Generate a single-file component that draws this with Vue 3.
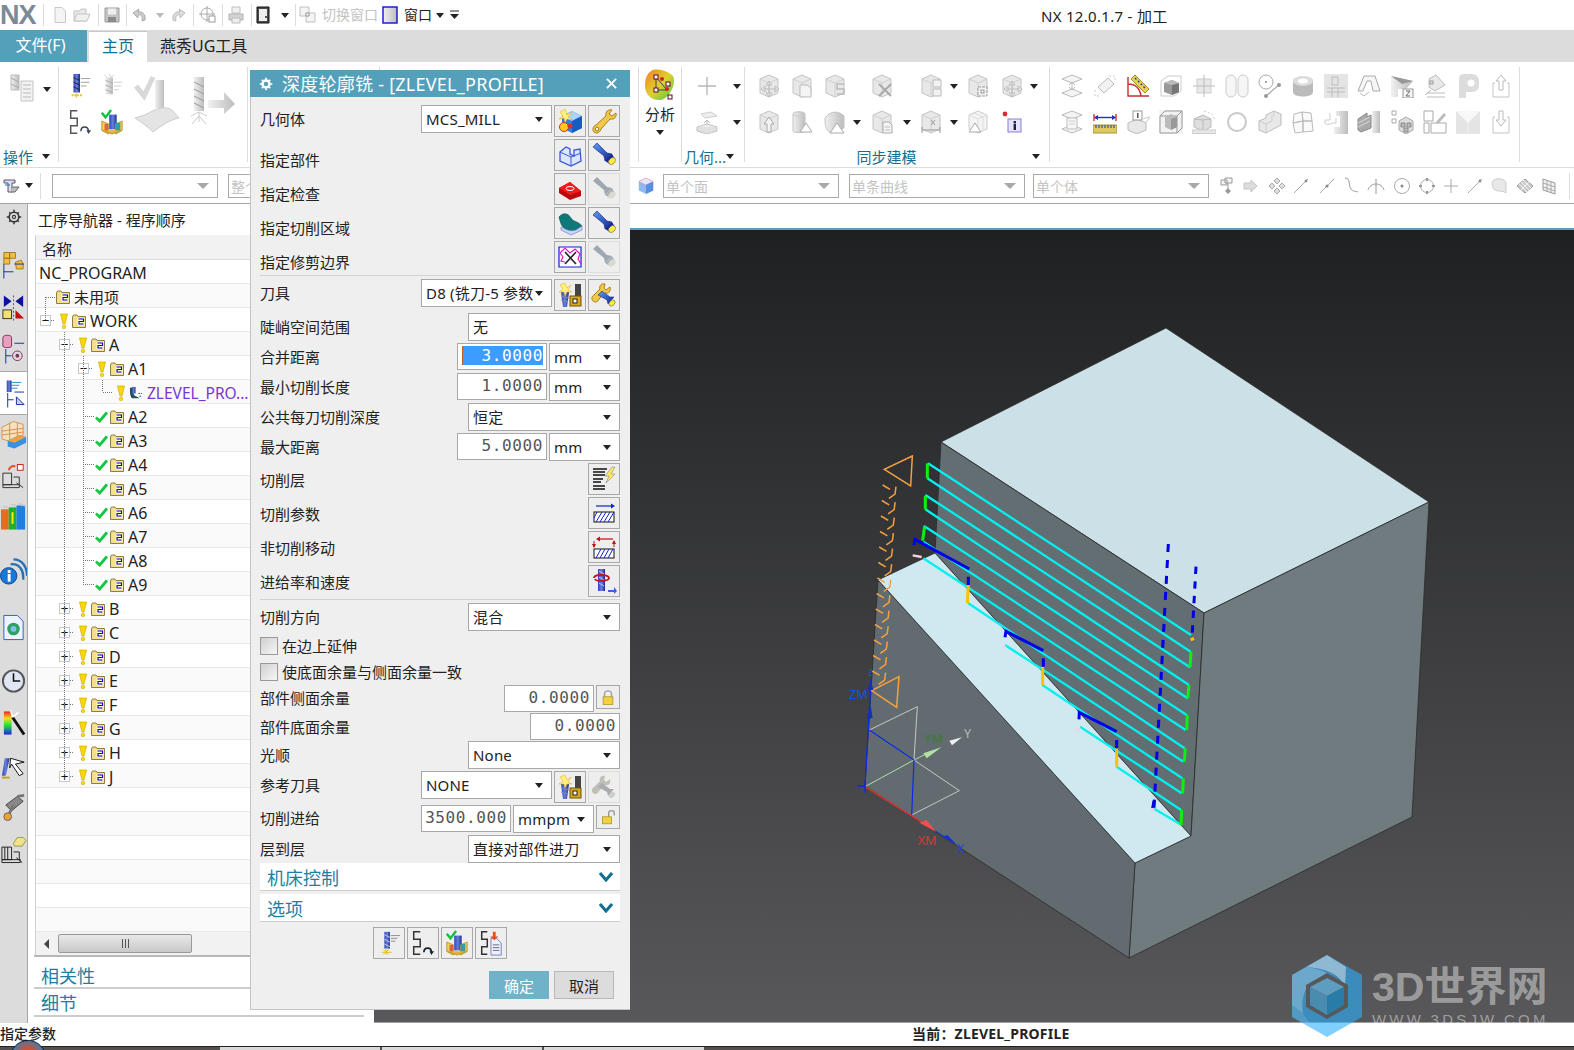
<script setup>
const place = (list) => {
  let r = 0
  return list.map((it) => {
    const ml = it.c - it.w / 2 - r
    r = it.c + it.w / 2
    return { ...it, ml }
  })
}

const topItems = place([
  { t: 'sep', c: 43, w: 1 }, { t: 'ic', ic: 't-doc', c: 60, w: 18 }, { t: 'ic', ic: 't-open', c: 82, w: 20 },
  { t: 'sep', c: 98, w: 1 }, { t: 'ic', ic: 't-save', c: 112, w: 18 }, { t: 'sep', c: 126, w: 1 },
  { t: 'ic', ic: 't-undo', c: 140, w: 16 }, { t: 'tri', g: 1, c: 160, w: 8 }, { t: 'ic', ic: 't-redo', c: 178, w: 16 },
  { t: 'sep', c: 193, w: 1 }, { t: 'ic', ic: 't-cross', c: 208, w: 18 }, { t: 'sep', c: 222, w: 1 },
  { t: 'ic', ic: 't-print', c: 236, w: 18 }, { t: 'sep', c: 251, w: 1 }, { t: 'ic', ic: 't-book', c: 263, w: 16 },
  { t: 'tri', c: 285, w: 9 }, { t: 'sep', c: 295, w: 1 }, { t: 'ic', ic: 't-sw', c: 308, w: 18 },
  { t: 'txt', v: '切换窗口', g: 1, c: 350, w: 56 }, { t: 'ic', ic: 't-win', c: 390, w: 16 },
  { t: 'txt', v: '窗口', c: 418, w: 28 }, { t: 'tri', c: 440, w: 9 }, { t: 'ic', ic: 't-tribar', c: 454, w: 9 },
])

const selItems = place([
  { t: 'ic', ic: 's-sel', c: 12, w: 18 }, { t: 'tri', c: 29, w: 9 }, { t: 'sep', c: 40, w: 1 },
  { t: 'cb', v: '', c: 135, w: 166 }, { t: 'cb', v: '整个', c: 282, w: 108 },
  { t: 'ic', ic: 's-cube', c: 645, w: 17 },
  { t: 'cb', v: '单个面', c: 750, w: 176 }, { t: 'cb', v: '单条曲线', c: 936, w: 176 }, { t: 'cb', v: '单个体', c: 1120, w: 176 },
  ...['f1', 'f2', 'f3', 'f4', 'f5', 'f6', 'f7', 'f8', 'f9', 'f10', 'f4', 'f12', 'f13', 'f14'].map((n, i) => ({
    t: 'ic', ic: n, c: [1227, 1249, 1276, 1300, 1326, 1350, 1375, 1401, 1426, 1450, 1474, 1498, 1524, 1548][i], w: 18,
  })),
  { t: 'sep', c: 1568, w: 1 },
])

const syncCells = [
  'c-move', 'c-doc', 'c-s', null, 'c-x', null, 'c-split', 'tri', 'c-sq', 'c-move', 'tri',
  'c-up', 'c-cyl', 'c-cyl2', 'tri', 'c-doc2', 'tri', 'c-dim', 'tri', 'c-tri', 'c-info', null,
]
const rightCells = [
  'r-planes', 'r-rot', 'r-ruler', 'r-wire', 'r-cross', 'r-caps', 'r-pt', 'r-torus', 'r-grid', 'r-trap', 'r-funnel', 'r-wedge', 'r-p', 'r-up',
  'q-stack', 'q-dim', 'q-box', 'q-wire', 'q-rcube', 'q-ring', 'q-step', 'q-puz', 'q-fau', 'q-steps', 'q-tree', 'q-pen', 'q-y', 'q-down',
]

const railItems = [
  { ic: 'n-gear', m: 5, s: 16 }, { ic: 'n-a', m: 25 }, { ic: 'n-b', m: 10 }, { ic: 'n-c', m: 10 },
  { ic: 'n-d', m: 5, active: true }, { ic: 'n-e', m: 4 }, { ic: 'n-f', m: 10 }, { ic: 'n-g', m: 9 },
  { ic: 'n-h', m: 22 }, { ic: 'n-i', m: 24 }, { ic: 'n-j', m: 21 }, { ic: 'n-k', m: 10 },
  { ic: 'n-l', m: 11 }, { ic: 'n-m', m: 9 }, { ic: 'n-n', m: 11 },
]

const kid = (n) => ({ n, x: 78, mark: 'check' })
const tw = (n) => ({ n, x: 59, exp: '+', mark: 'bulb' })
const treeRows = [
  { n: 'NC_PROGRAM', plain: true },
  { n: '未用项', bare: true },
  { n: 'WORK', x: 40, exp: '-', mark: 'bulb' },
  { n: 'A', x: 59, exp: '-', mark: 'bulb' },
  { n: 'A1', x: 78, exp: '-', mark: 'bulb' },
  { n: 'ZLEVEL_PRO...', x: 97, mark: 'bulb', op: true },
  ...['A2', 'A3', 'A4', 'A5', 'A6', 'A7', 'A8', 'A9'].map(kid),
  ...['B', 'C', 'D', 'E', 'F', 'G', 'H', 'J'].map(tw),
  ...Array.from({ length: 6 }, () => ({ n: '', plain: true })),
]
const rowPad = (r) => (r.plain ? 3 : r.bare ? 20 : r.x - 36)

const btn = (ic, dis) => ({ t: 'btn', ic, dis })
const full = (v) => [{ t: 'combo', v, w: 152 }]
const nu = (v, sel) => [{ t: 'num', v, w: 90, sel }, { t: 'unit', v: 'mm', w: 71 }]
const dialogRows = [
  { l: '几何体', h: 'h34', items: [{ t: 'combo', v: 'MCS_MILL', w: 131 }, btn('d-new'), btn('d-wrench')] },
  { l: '指定部件', h: 'h34', low: 'low', items: [btn('d-part'), btn('d-torch')] },
  { l: '指定检查', h: 'h34', low: 'low', items: [btn('d-check'), btn('d-torchg', 1)] },
  { l: '指定切削区域', h: 'h34', low: 'low', items: [btn('d-area'), btn('d-torch')] },
  { l: '指定修剪边界', h: 'h34', low: 'low', items: [btn('d-trim'), btn('d-torchg', 1)] },
  { sep: 1 },
  { l: '刀具', h: 'h34', items: [{ t: 'combo', v: 'D8 (铣刀-5 参数', w: 131 }, btn('d-tool'), btn('d-wt')] },
  { l: '陡峭空间范围', h: 'h30', items: full('无') },
  { l: '合并距离', h: 'h30', items: nu('3.0000', 1) },
  { l: '最小切削长度', h: 'h30', items: nu('1.0000') },
  { l: '公共每刀切削深度', h: 'h30', items: full('恒定') },
  { l: '最大距离', h: 'h30', items: nu('5.0000') },
  { l: '切削层', h: 'h34', low: 'mid', items: [btn('d-layers')] },
  { l: '切削参数', h: 'h34', low: 'mid', items: [btn('d-params')] },
  { l: '非切削移动', h: 'h34', low: 'mid', items: [btn('d-noncut')] },
  { l: '进给率和速度', h: 'h34', low: 'mid', items: [btn('d-feeds')] },
  { sep: 1 },
  { l: '切削方向', h: 'h34', items: full('混合') },
  { l: '在边上延伸', h: 'h26', cb: 1 },
  { l: '使底面余量与侧面余量一致', h: 'h22', cb: 1 },
  { l: '部件侧面余量', h: 'h28', low: 'up', items: [{ t: 'num', v: '0.0000', w: 90 }, { t: 'lock', ic: 'd-lock' }] },
  { l: '部件底面余量', h: 'h28', items: [{ t: 'num', v: '0.0000', w: 90 }] },
  { l: '光顺', h: 'h30', items: full('None') },
  { l: '参考刀具', h: 'h34', items: [{ t: 'combo', v: 'NONE', w: 131 }, btn('d-tool'), btn('d-wtg', 1)] },
  { l: '切削进给', h: 'h30', low: 'up', items: [{ t: 'num', v: '3500.000', w: 90 }, { t: 'unit', v: 'mmpm', w: 81 }, { t: 'lock', ic: 'd-unlock' }] },
  { l: '层到层', h: 'h28', items: full('直接对部件进刀') },
]

const toolLines = [
  [264, 130, 1053, 645], [262, 175, 1052, 695], [256, 225, 1050, 742], [256, 268, 1047, 795], [252, 318, 1043, 835],
  [250, 365, 1040, 885], [250, 415, 1037, 930], [385, 550, 1034, 985], [495, 675, 1030, 1025], [607, 795, 1027, 1075],
  [720, 920, 1025, 1120], [830, 1040, 1023, 1170], [940, 1165, 1025, 1215],
]
const greens = [
  [262, 130, 262, 175], [256, 228, 256, 268], [254, 318, 248, 362], [1053, 695, 1050, 742], [1047, 795, 1043, 835],
  [1042, 885, 1040, 930], [1036, 985, 1033, 1025], [1030, 1075, 1028, 1120], [1025, 1170, 1023, 1215],
]
const chevrons = Array.from({ length: 13 }, (_, i) => {
  const x = 128 - 2.6 * i
  const y = 195 + 46.5 * i
  return `M${x} ${y}l22 13M${x + 40} ${y + 5}l-3 22l-18 13`
}).join('')
</script>

<template>
  <div class="page">
    <svg class="defs" width="0" height="0" aria-hidden="true">
      <defs>
        <linearGradient id="gy" x1="0" x2="1" y1="0" y2="0"><stop offset="0" stop-color="#f0f0f0" /><stop offset="1" stop-color="#bdbdbd" /></linearGradient>
        <linearGradient id="tool" x1="0" x2="1" y1="0" y2="0"><stop offset="0" stop-color="#2a45c0" /><stop offset=".5" stop-color="#6a80d8" /><stop offset="1" stop-color="#1a2a90" /></linearGradient>
        <linearGradient id="torch" x1="0" x2="1" y1="0" y2="1"><stop offset="0" stop-color="#5aa0ff" /><stop offset="1" stop-color="#10208a" /></linearGradient>
        <linearGradient id="rain" x1="0" x2="0" y1="0" y2="1"><stop offset="0" stop-color="#f02020" /><stop offset=".3" stop-color="#f0e020" /><stop offset=".6" stop-color="#20e040" /><stop offset="1" stop-color="#2020f0" /></linearGradient>
        <linearGradient id="ana" x1="0" x2="1" y1="0" y2="1"><stop offset="0" stop-color="#f08020" /><stop offset=".5" stop-color="#e0d030" /><stop offset="1" stop-color="#40d040" /></linearGradient>

        <symbol id="t-doc" viewBox="0 0 18 18"><path d="M4 1.5H11L14.5 5V16.5H4Z" fill="#f4f4f4" stroke="#c8c8c8" /></symbol>
        <symbol id="t-open" viewBox="0 0 20 18"><path d="M2 15V5H7L9 3H14V15Z" fill="#e8e8e8" stroke="#c4c4c4" /><path d="M2 15 5 8H18L15 15Z" fill="#f0f0f0" stroke="#c4c4c4" /></symbol>
        <symbol id="t-save" viewBox="0 0 18 18"><path d="M2 2H16V16H2Z" fill="#c4c4c4" stroke="#9a9a9a" /><rect x="5" y="2.5" width="8" height="6" fill="#eee" /><rect x="5" y="11" width="8" height="5" fill="#8a8a8a" /></symbol>
        <symbol id="t-undo" viewBox="0 0 16 18"><path d="M13 14C14 8 10 5 6 6L7 3 1 7 6 12 6 9C9 8 11 10 10 15Z" fill="#ccc" stroke="#aaa" /></symbol>
        <symbol id="t-redo" viewBox="0 0 16 18"><path d="M3 14C2 8 6 5 10 6L9 3 15 7 10 12 10 9C7 8 5 10 6 15Z" fill="#ddd" stroke="#bbb" /></symbol>
        <symbol id="t-cross" viewBox="0 0 18 18"><circle cx="8" cy="8" r="6" fill="none" stroke="#aaa" /><path d="M8 0V16M0 8H16" stroke="#aaa" /><rect x="10" y="10" width="6" height="6" fill="#fff" stroke="#999" /></symbol>
        <symbol id="t-print" viewBox="0 0 18 18"><path d="M5 1H13V7H5Z" fill="#f2f2f2" stroke="#c0c0c0" /><path d="M2 8H16V14H2Z" fill="#d4d4d4" stroke="#b0b0b0" /><path d="M5 12H13V17H5Z" fill="#eee" stroke="#bbb" /></symbol>
        <symbol id="t-book" viewBox="0 0 16 18"><path d="M2 1H14V17H2Z" fill="#4a4a4a" stroke="#111" /><rect x="4" y="3" width="8" height="12" fill="#eee" /><circle cx="11" cy="11" r="1" fill="#222" /></symbol>
        <symbol id="t-sw" viewBox="0 0 18 18"><path d="M1 1H10V10H1ZM7 7H16V16H7Z" fill="#f4f4f4" stroke="#c0c0c0" /><path d="M7 7H10V10H7Z" fill="#fff" stroke="#999" /></symbol>
        <symbol id="t-win" viewBox="0 0 16 18"><rect x="1" y="1" width="14" height="16" fill="url(#gy)" stroke="#1010d0" stroke-width="1.4" /></symbol>
        <symbol id="t-tribar" viewBox="0 0 9 10"><path d="M0 1H9" stroke="#222" /><path d="M0 4H9L4.5 9Z" fill="#222" /></symbol>

        <symbol id="s-sel" viewBox="0 0 18 18"><path d="M1 3H12V6H9V15H5V6H1Z" fill="#dde" stroke="#557" /><path d="M9 10H16L12 15H8" fill="#bbb" stroke="#666" /><path d="M2 8H7" stroke="#27a" /></symbol>
        <symbol id="s-cube" viewBox="0 0 18 20"><path d="M9 1 17 5V15L9 19 1 15V5Z" fill="#8fb8ef" /><path d="M9 1 17 5 9 9 1 5Z" fill="#dfe9fb" stroke="#e88" stroke-width=".6" /><path d="M9 9V19L17 15V5Z" fill="#5a8fe0" /></symbol>

        <symbol id="f1" viewBox="0 0 18 18"><path d="M2 3H8V8H2ZM6 1H13V6H6ZM9 6V12" fill="#f4f4f4" stroke="#999" /><path d="M9 11 6 14 9 17 12 14Z" fill="#999" /></symbol>
        <symbol id="f2" viewBox="0 0 18 18"><path d="M3 6H10V3L16 9 10 15V12H3Z" fill="#ddd" stroke="#c4c4c4" /></symbol>
        <symbol id="f3" viewBox="0 0 18 18"><path d="M9 1 12 4 9 7 6 4ZM9 11 12 14 9 17 6 14ZM1 9 4 6 7 9 4 12ZM11 9 14 6 17 9 14 12Z" fill="#ddd" stroke="#aaa" /></symbol>
        <symbol id="f4" viewBox="0 0 18 18"><path d="M2 16 16 2" stroke="#aaa" /><circle cx="14" cy="4" r="1.4" fill="#888" /></symbol>
        <symbol id="f5" viewBox="0 0 18 18"><path d="M2 16 16 2" stroke="#aaa" /><circle cx="9" cy="9" r="1.6" fill="#888" /></symbol>
        <symbol id="f6" viewBox="0 0 18 18"><path d="M3 1C9 1 6 8 9 12 11 15 14 14 16 15" fill="none" stroke="#999" /></symbol>
        <symbol id="f7" viewBox="0 0 18 18"><path d="M1 13C3 5 15 5 17 13M9 2V17" fill="none" stroke="#999" /></symbol>
        <symbol id="f8" viewBox="0 0 18 18"><circle cx="9" cy="9" r="7.5" fill="#fff" stroke="#aaa" /><circle cx="9" cy="9" r="1.5" fill="#888" /></symbol>
        <symbol id="f9" viewBox="0 0 18 18"><circle cx="9" cy="9" r="6.5" fill="none" stroke="#aaa" /><path d="M9 1V4M9 14V17M1 9H4M14 9H17" stroke="#999" stroke-width="2" /></symbol>
        <symbol id="f10" viewBox="0 0 18 18"><path d="M9 2V16M2 9H16" stroke="#aaa" /></symbol>
        <symbol id="f12" viewBox="0 0 18 18"><path d="M4 3C9 0 16 3 16 6V16C12 13 8 15 5 13 2 11 1 5 4 3Z" fill="#e8e8e8" stroke="#ccc" /></symbol>
        <symbol id="f13" viewBox="0 0 18 18"><path d="M9 2 17 9 9 16 1 9Z" fill="#ccc" stroke="#999" /><path d="M5 5 13 13M13 5 5 13M7 3 15 11M3 7 11 15" stroke="#eee" /></symbol>
        <symbol id="f14" viewBox="0 0 18 18"><path d="M3 2 15 6V17L3 13Z" fill="#f2f2f2" stroke="#999" /><path d="M7 3V14M11 5V16M3 6 15 10M3 10 15 14" stroke="#aaa" /></symbol>

        <symbol id="g-op" viewBox="0 0 28 34"><path d="M3 3H11V18H3Z" fill="url(#gy)" stroke="#bbb" /><path d="M3 6 11 10M3 12 11 16" stroke="#aaa" /><path d="M13 9H25V29H13Z" fill="#f2f2f2" stroke="#c4c4c4" /><path d="M15 13H23M15 17H23M15 21H23M15 25H23" stroke="#bbb" /></symbol>
        <symbol id="g-tool" viewBox="0 0 26 28"><rect x="6" y="1" width="7" height="20" fill="url(#tool)" /><path d="M6 5 13 8M6 10 13 13M6 15 13 18" stroke="#223" /><path d="M14 6H24M14 10 23 10M14 14 20 14" stroke="#999" /><path d="M4 24H15" stroke="#e8c020" stroke-width="2" stroke-dasharray="2 1" /><path d="M9 21V27" stroke="#e8c020" /></symbol>
        <symbol id="g-toolg" viewBox="0 0 26 28"><rect x="6" y="5" width="8" height="18" fill="url(#gy)" /><path d="M6 8 14 11M6 13 14 16M6 18 14 21" stroke="#aaa" /><path d="M15 10H24M15 14 23 14M15 18 20 18" stroke="#ccc" /><path d="M10 1 12 5M15 2 12 5M5 2 8 5" stroke="#ccc" /></symbol>
        <symbol id="g-s" viewBox="0 0 26 28"><path d="M10 2H3V10H10V18H3V26H10" fill="none" stroke="#555" stroke-width="1.6" /><path d="M14 24C14 18 22 18 22 24" fill="none" stroke="#345" stroke-width="1.6" /><path d="M20 23H25L22 27Z" fill="#345" /></symbol>
        <symbol id="g-ver" viewBox="0 0 28 28"><path d="M3 4 7 9 13 1" fill="none" stroke="#10c040" stroke-width="2.6" /><rect x="11" y="6" width="8" height="16" fill="url(#tool)" /><path d="M3 13 10 16V27L3 23ZM25 13 18 16V27L25 23Z" fill="#f0d050" stroke="#b89a30" /><path d="M3 23 14 27 25 23" fill="#e8b030" stroke="#b89a30" /><rect x="18" y="15" width="5" height="8" fill="#30a0a0" /><rect x="6" y="16" width="4" height="7" fill="#e06040" /></symbol>
        <symbol id="g-big1" viewBox="0 0 48 60"><path d="M3 12 11 22 20 3" fill="none" stroke="#d8d8d8" stroke-width="5" /><rect x="22" y="6" width="9" height="28" fill="url(#gy)" /><path d="M2 44C18 40 24 32 34 34 40 35 44 42 46 44 36 46 28 52 20 58 14 52 8 48 2 44Z" fill="#e4e4e4" stroke="#ccc" /></symbol>
        <symbol id="g-big2" viewBox="0 0 48 60"><rect x="6" y="3" width="10" height="34" fill="url(#gy)" /><path d="M6 8 16 13M6 15 16 20M6 22 16 27M6 29 16 34" stroke="#999" /><path d="M20 26H36V18L47 30 36 40V34H20Z" fill="url(#gy)" /><path d="M11 38V48M3 42 11 38 19 42M4 50 11 42 18 50" fill="none" stroke="#ccc" /></symbol>

        <symbol id="a-ana" viewBox="0 0 34 34"><path d="M8 3C14-1 26 4 30 8 34 16 26 30 18 32 8 33 2 26 2 18 2 10 4 6 8 3Z" fill="url(#ana)" /><path d="M13 9 24 22 13 22 Z" fill="none" stroke="#444" /><rect x="11" y="7" width="4" height="4" fill="#ffe" stroke="#603" /><rect x="23" y="14" width="4" height="4" fill="#ffe" stroke="#603" /><rect x="11" y="20" width="4" height="4" fill="#ffe" stroke="#603" /><rect x="25" y="27" width="4" height="4" fill="#ffe" stroke="#603" /><circle cx="19" cy="11" r="2" fill="#d02020" /><circle cx="24" cy="21" r="2" fill="#d02020" /></symbol>
        <symbol id="a-plus" viewBox="0 0 24 24"><path d="M12 3V21M3 12H21" stroke="#b8b8b8" stroke-width="1.4" /></symbol>
        <symbol id="a-extr" viewBox="0 0 24 24"><path d="M6 4 16 2 22 6 10 8Z" fill="#eee" stroke="#ccc" /><path d="M12 11V16M9 13 12 10 15 13" stroke="#bbb" fill="none" /><path d="M2 17 12 14 22 17 12 21Z" fill="#eee" stroke="#c4c4c4" /><path d="M2 17V21L12 24 22 21V17" fill="#e0e0e0" stroke="#c4c4c4" /></symbol>

        <symbol id="cube" viewBox="0 0 24 24"><path d="M12 1 21 5V19L12 23 3 19V5Z" fill="#e8e8e8" stroke="#c4c4c4" /><path d="M3 5 12 9 21 5M12 9V23" fill="none" stroke="#d0d0d0" /></symbol>
        <symbol id="c-move" viewBox="0 0 24 24"><use href="#cube" width="24" height="24" /><path d="M12 8V22M6 15H20M12 7 9 11H15ZM12 23 9 19H15ZM4 15 8 12V18ZM22 15 18 12V18Z" fill="#f5f5f5" stroke="#bbb" /></symbol>
        <symbol id="c-doc" viewBox="0 0 24 24"><use href="#cube" width="24" height="24" /><path d="M10 11H17L21 14V23H10Z" fill="#f4f4f4" stroke="#bbb" /></symbol>
        <symbol id="c-s" viewBox="0 0 24 24"><use href="#cube" width="24" height="24" /><path d="M21 10H14V15H21V20H14" fill="none" stroke="#bbb" stroke-width="1.5" /></symbol>
        <symbol id="c-x" viewBox="0 0 24 24"><use href="#cube" width="24" height="24" /><path d="M9 10 21 22M21 10 9 22" stroke="#aaa" stroke-width="2" /></symbol>
        <symbol id="c-split" viewBox="0 0 24 24"><use href="#cube" width="24" height="24" /><path d="M14 6H22V13H14ZM14 15H22V22H14Z" fill="#f2f2f2" stroke="#bbb" /></symbol>
        <symbol id="c-sq" viewBox="0 0 24 24"><use href="#cube" width="24" height="24" /><path d="M12 13H21V22H12Z" fill="#f4f4f4" stroke="#999" stroke-dasharray="3 1" /><rect x="15" y="16" width="3" height="3" fill="none" stroke="#999" /></symbol>
        <symbol id="c-up" viewBox="0 0 24 24"><use href="#cube" width="24" height="24" /><path d="M12 7 7 14H10V22H14V14H17Z" fill="#f4f4f4" stroke="#aaa" /></symbol>
        <symbol id="c-cyl" viewBox="0 0 24 24"><path d="M3 4C3 1 15 1 15 4V21C15 23 3 23 3 21Z" fill="url(#gy)" stroke="#c4c4c4" /><path d="M3 4C3 7 15 7 15 4" fill="none" stroke="#ccc" /><path d="M16 13 22 22H10Z" fill="#fff" stroke="#aaa" /></symbol>
        <symbol id="c-cyl2" viewBox="0 0 24 24"><path d="M2 8C8 0 16 1 21 6V18L8 23C2 20 2 14 2 8Z" fill="url(#gy)" stroke="#c4c4c4" /><path d="M14 13 21 23H7Z" fill="#fff" stroke="#aaa" /></symbol>
        <symbol id="c-doc2" viewBox="0 0 24 24"><use href="#cube" width="24" height="24" /><path d="M13 12H19L22 15V23H13Z" fill="#f4f4f4" stroke="#aaa" /><path d="M15 17H20M15 20H20" stroke="#bbb" /></symbol>
        <symbol id="c-dim" viewBox="0 0 24 24"><use href="#cube" width="24" height="24" /><path d="M3 20H21M3 17V23M21 17V23M12 10 16 15M16 10 12 15" stroke="#999" fill="none" /></symbol>
        <symbol id="c-tri" viewBox="0 0 24 24"><path d="M12 1 21 5V19L12 23 3 19V5Z" fill="#f4f4f4" stroke="#ccc" /><path d="M3 5 12 9 21 5M12 9V23M8 3 17 7V21" fill="none" stroke="#ddd" /><path d="M9 13 15 22H3Z" fill="#fff" stroke="#aaa" /></symbol>
        <symbol id="c-info" viewBox="0 0 24 24"><circle cx="5" cy="4" r="2.4" fill="#d03030" /><rect x="8" y="9" width="13" height="13" fill="#e4e2ff" stroke="#8a80d0" /><rect x="13.6" y="11" width="2.4" height="2.4" fill="#223" /><rect x="13.6" y="14" width="2.4" height="6" fill="#223" /></symbol>

        <symbol id="r-planes" viewBox="0 0 24 24"><path d="M2 5 12 1 22 5 12 9ZM2 19 12 15 22 19 12 23Z" fill="#f4f4f4" stroke="#bbb" /><path d="M12 9V15M9 11 12 8 15 11M9 13 12 16 15 13" fill="none" stroke="#bbb" /></symbol>
        <symbol id="r-rot" viewBox="0 0 24 24"><path d="M5 13 15 4 21 10 11 19Z" fill="#f2f2f2" stroke="#bbb" /><path d="M16 2 22 2 22 8M2 16 2 22 8 22" fill="none" stroke="#ccc" stroke-dasharray="2 2" /></symbol>
        <symbol id="r-ruler" viewBox="0 0 24 24"><path d="M9 1 23 15 19 19 5 5Z" fill="#e8d050" stroke="#a09030" /><path d="M9 4 20 15" stroke="#2040c0" stroke-width="1.4" stroke-dasharray="2 2" /><path d="M2 3V22H23M2 10C10 10 14 15 15 22" fill="none" stroke="#c83030" stroke-width="1.4" /></symbol>
        <symbol id="r-wire" viewBox="0 0 24 24"><path d="M2 7 9 2H22V17L15 22H2Z" fill="none" stroke="#ccc" /><path d="M5 9 13 6 20 9V18L13 21 5 18Z" fill="#999" /><path d="M13 11V21L20 18V9Z" fill="#777" /><path d="M5 9 13 6 20 9 13 11Z" fill="#bbb" /></symbol>
        <symbol id="r-cross" viewBox="0 0 24 24"><rect x="5" y="5" width="14" height="14" fill="#e8e8e8" stroke="#ccc" /><path d="M12 1V23M1 12H23" stroke="#bbb" /></symbol>
        <symbol id="r-caps" viewBox="0 0 24 24"><rect x="1" y="1" width="10" height="22" rx="5" fill="#f6f6f6" stroke="#ccc" /><rect x="13" y="1" width="10" height="22" rx="5" fill="#f6f6f6" stroke="#ccc" /></symbol>
        <symbol id="r-pt" viewBox="0 0 24 24"><circle cx="8" cy="8" r="7" fill="none" stroke="#aaa" /><circle cx="8" cy="8" r="1" fill="#888" /><path d="M8 22 22 10" stroke="#aaa" stroke-width="1.2" /><circle cx="8" cy="22" r="2" fill="#999" /><circle cx="21" cy="11" r="2" fill="#999" /></symbol>
        <symbol id="r-torus" viewBox="0 0 24 24"><path d="M2 7C2 1 22 1 22 7V18C22 24 2 24 2 18Z" fill="#bbb" /><ellipse cx="12" cy="7" rx="10" ry="5" fill="#ddd" /><ellipse cx="12" cy="7" rx="5" ry="2.6" fill="#fff" /></symbol>
        <symbol id="r-grid" viewBox="0 0 24 24"><rect width="24" height="24" fill="#e4e4e4" /><path d="M3 14H21M3 18H21M8 14V23M14 14V23M8 3H14V11H8Z" fill="none" stroke="#bbb" /></symbol>
        <symbol id="r-trap" viewBox="0 0 24 24"><path d="M7 2H18L23 17H16L14 7H10L6 17H1Z" fill="#f6f6f6" stroke="#aaa" /><path d="M3 19 7 22 12 18" fill="none" stroke="#bbb" /></symbol>
        <symbol id="r-funnel" viewBox="0 0 24 24"><path d="M1 2 23 7 16 15H8V23H1Z" fill="url(#gy)" /><path d="M1 2 23 7 12 10Z" fill="#999" /><rect x="13" y="15" width="10" height="9" fill="#f4f4f4" stroke="#999" /><path d="M16 17H20L16 22H20" fill="none" stroke="#666" /></symbol>
        <symbol id="r-wedge" viewBox="0 0 24 24"><path d="M6 5 13 1 22 11 12 17 6 13Z" fill="#e8e8e8" stroke="#bbb" /><rect x="7" y="7" width="3" height="3" fill="none" stroke="#999" /><path d="M2 21 8 16M4 19H22M4 23H22" stroke="#bbb" /></symbol>
        <symbol id="r-p" viewBox="0 0 24 24"><path d="M3 24V4Q3 0 8 0H16Q23 0 23 8V11Q23 18 16 18H10V24Z" fill="#dcdcdc" /><circle cx="15" cy="9" r="3.5" fill="#fff" /></symbol>
        <symbol id="r-up" viewBox="0 0 24 24"><path d="M12 1 7 7H10V16H14V7H17Z" fill="#fff" stroke="#bbb" /><path d="M6 9H4V23H20V9H18" fill="none" stroke="#c4c4c4" /></symbol>
        <symbol id="q-stack" viewBox="0 0 24 24"><path d="M2 5 12 1 22 5 12 9ZM2 19 12 15 22 19 12 23Z" fill="#f4f4f4" stroke="#bbb" /><rect x="7" y="8" width="10" height="11" fill="#f6f6f6" stroke="#bbb" /><path d="M9 11H15M9 14H15" stroke="#ccc" /></symbol>
        <symbol id="q-dim" viewBox="0 0 24 24"><path d="M1 4V11M23 4V11" stroke="#d03030" stroke-width="1.4" /><path d="M2 7.500H22" stroke="#2030c0" stroke-width="1.4" /><path d="M1 7.500 5 5V10ZM23 7.500 19 5V10Z" fill="#2030c0" /><rect x="0" y="15" width="24" height="8" fill="#e0c860" stroke="#a89540" /><path d="M3 15V18M6 15V18M9 15V18M12 15V18M15 15V18M18 15V18M21 15V18" stroke="#2030c0" /></symbol>
        <symbol id="q-box" viewBox="0 0 24 24"><path d="M2 13 11 9 20 13V20L11 24 2 20Z" fill="#e8e8e8" stroke="#bbb" /><rect x="7" y="1" width="9" height="9" fill="#fff" stroke="#999" /><rect x="11" y="3" width="1.500" height="5" fill="#555" /><path d="M16 9 24 7 19 14" fill="none" stroke="#ccc" /></symbol>
        <symbol id="q-wire" viewBox="0 0 24 24"><rect width="24" height="24" fill="#f2f2f2" /><path d="M1 6 6 1H23V18L18 23H1ZM1 6H18V23M18 6 23 1" fill="none" stroke="#999" /><path d="M6 7 12 4 18 7V17L12 20 6 17Z" fill="#bbb" /><path d="M12 9V20L18 17V7Z" fill="#999" /></symbol>
        <symbol id="q-rcube" viewBox="0 0 24 24"><path d="M2 9 11 5 19 9V17L11 21 2 17Z" fill="#ddd" stroke="#bbb" /><path d="M11 10V21M2 9 11 10 19 9" fill="none" stroke="#bbb" /><path d="M12 1 20 4 23 10" fill="none" stroke="#ccc" stroke-dasharray="2 2" /><rect x="0" y="20" width="24" height="3.500" fill="#e8e8e8" stroke="#ccc" /></symbol>
        <symbol id="q-ring" viewBox="0 0 24 24"><circle cx="12" cy="12" r="9" fill="#fff" stroke="#c8c8c8" stroke-width="2" /></symbol>
        <symbol id="q-step" viewBox="0 0 24 24"><path d="M1 11 8 8V5L16 1 23 4V15L8 23 1 20Z" fill="#e8e8e8" stroke="#bbb" /><path d="M1 11 8 14V23M8 14 14 11V5M16 1V6" fill="none" stroke="#ccc" /></symbol>
        <symbol id="q-puz" viewBox="0 0 24 24"><path d="M3 4 11 2 12 11 2 13ZM11 2 20 3 21 11 12 11ZM2 13 12 11 12 22 4 23ZM12 11 21 11 22 21 12 22Z" fill="#fafafa" stroke="#bbb" /></symbol>
        <symbol id="q-fau" viewBox="0 0 24 24"><path d="M6 3V10H1V13C1 15 6 15 8 13H12V8" fill="none" stroke="#ccc" /><path d="M12 1H24V24H10V17H16V6H12Z" fill="url(#gy)" /></symbol>
        <symbol id="q-steps" viewBox="0 0 24 24"><path d="M1 9 10 3V7L14 5V18L4 22 1 20Z" fill="#aaa" stroke="#888" /><path d="M1 13 13 7M1 17 13 11" stroke="#ddd" /><rect x="15" y="1" width="8" height="22" fill="url(#gy)" /></symbol>
        <symbol id="q-tree" viewBox="0 0 24 24"><path d="M2 1H6V5H2ZM2 9H6V13H2Z" fill="#fff" stroke="#aaa" /><path d="M9 11 16 7 23 11V20L16 24 9 20Z" fill="#ddd" stroke="#aaa" /><path d="M11 13H15V17H11ZM17 13H21V17H17ZM14 18H18V22H14Z" fill="#bbb" stroke="#888" /></symbol>
        <symbol id="q-pen" viewBox="0 0 24 24"><path d="M1 1H10V11H1ZM1 13H6V23H1ZM8 13H23V23H8Z" fill="#fff" stroke="#aaa" /><path d="M13 12 21 3 23 5 15 14Z" fill="#bbb" /></symbol>
        <symbol id="q-y" viewBox="0 0 24 24"><path d="M0 1H24V24H0Z" fill="#e4e4e4" /><path d="M0 1 12 13 24 1Z" fill="#f8f8f8" /><path d="M12 13V24" stroke="#f0f0f0" /></symbol>
        <symbol id="q-down" viewBox="0 0 24 24"><path d="M10 1H14V10H17L12 16 7 10H10Z" fill="#fff" stroke="#bbb" /><path d="M6 7H4V23H20V7H18" fill="none" stroke="#c4c4c4" /></symbol>

        <symbol id="n-gear" viewBox="0 0 20 20"><circle cx="10" cy="10" r="6" fill="none" stroke="#333" stroke-width="2" /><circle cx="10" cy="10" r="2" fill="none" stroke="#333" stroke-width="1.4" /><path d="M10 1V4M10 16V19M1 10H4M16 10H19M4 4 6 6M14 14 16 16M16 4 14 6M6 14 4 16" stroke="#333" stroke-width="1.8" /></symbol>
        <symbol id="n-a" viewBox="0 0 28 32"><path d="M4 2H10V8H4ZM10 2H16V8H10ZM4 8H10V14H4Z" fill="#f2c040" stroke="#a07a20" /><path d="M16 12 22 10 24 14 24 19H17Z" fill="#f2c040" stroke="#a07a20" /><path d="M4 14V29M4 22H14M15 14H25" stroke="#1030a0" fill="none" /></symbol>
        <symbol id="n-b" viewBox="0 0 28 32"><path d="M4 3 12 9 4 15ZM24 3 16 9 24 15Z" fill="#1010a0" /><path d="M14 3V30" stroke="#555" stroke-dasharray="2 2" /><rect x="3" y="18" width="9" height="9" fill="#f0e070" stroke="#333" /><path d="M16 18 25 27H16Z" fill="#c01010" /></symbol>
        <symbol id="n-c" viewBox="0 0 28 32"><path d="M3 3C3 0 12 0 12 3V12C12 14 3 14 3 12Z" fill="#e8a0c0" stroke="#803060" /><path d="M15 9H25M6 15V30M6 22H12" stroke="#1030a0" /><circle cx="18" cy="22" r="5" fill="none" stroke="#803060" /><circle cx="18" cy="22" r="2" fill="#803060" /></symbol>
        <symbol id="n-d" viewBox="0 0 28 32"><rect x="7" y="3" width="5" height="12" fill="url(#tool)" /><path d="M12 5H22M12 8H20M12 11H18" stroke="#2090c0" /><path d="M15 15H25M8 16V31M8 23H14" stroke="#1030a0" /><path d="M17 20V28H25Z" fill="#cce" stroke="#1030a0" /></symbol>
        <symbol id="n-e" viewBox="0 0 28 32"><path d="M2 8 14 2 24 5V16L14 24 2 20Z" fill="#f2e2c0" stroke="#e09050" /><path d="M2 12 24 9M2 16 24 13M10 3V22M18 3V20" stroke="#e08a50" /><path d="M8 22 20 16 27 18V24L15 30 8 28Z" fill="#3a90e0" /><path d="M8 22 20 16 27 18 15 24Z" fill="#f0a040" /></symbol>
        <symbol id="n-f" viewBox="0 0 28 32"><path d="M3 12H12V24H3ZM3 24H20V27H3Z" fill="#ddd" stroke="#333" /><path d="M14 16H20V24M17 22 24 27" fill="none" stroke="#333" /><path d="M9 9C10 5 13 4 16 5" fill="none" stroke="#e05020" stroke-width="2" /><rect x="18" y="3" width="6" height="6" fill="#fff" stroke="#d02020" /></symbol>
        <symbol id="n-g" viewBox="0 0 28 32"><path d="M1 7H9V28H1Z" fill="#e07020" /><path d="M9 5H17V28H9Z" fill="#20b030" /><path d="M17 3H26V28H17Z" fill="#2080e0" /><path d="M3 4 9 5M11 2 17 3 M19 1 26 3" stroke="#ccc" stroke-width="2" /><rect x="12" y="10" width="2" height="12" fill="#fe0" /></symbol>
        <symbol id="n-h" viewBox="0 0 28 32"><path d="M11 8C20 7 25 14 24 24M14 3C24 3 28 12 28 20" fill="none" stroke="#2a6fb0" stroke-width="2.4" /><circle cx="9" cy="20" r="8.500" fill="#1878d8" stroke="#0a4a90" /><rect x="8" y="14" width="3" height="3" fill="#fff" /><rect x="8" y="18" width="3" height="8" fill="#fff" /></symbol>
        <symbol id="n-i" viewBox="0 0 28 32"><path d="M4 3H18L24 9V28H4Z" fill="#eef4ff" stroke="#3060c0" /><circle cx="14" cy="17" r="6.500" fill="#30a060" /><circle cx="14" cy="17" r="3" fill="#80c0f0" /></symbol>
        <symbol id="n-j" viewBox="0 0 28 32"><circle cx="14" cy="16" r="11" fill="#dfe6f4" stroke="#555" stroke-width="2" /><path d="M14 8V16H21" fill="none" stroke="#111" stroke-width="1.6" /></symbol>
        <symbol id="n-k" viewBox="0 0 28 32"><rect x="4" y="4" width="8" height="24" fill="url(#rain)" /><path d="M13 10 25 28" stroke="#111" stroke-width="3" /><path d="M13 10 11 3M13 10 19 5" stroke="#fff" stroke-width="1.6" /></symbol>
        <symbol id="n-l" viewBox="0 0 28 32"><path d="M5 8H10L6 26H2Z" fill="url(#tool)" /><path d="M11 8 25 12 16 14 24 24 20 26 12 14 10 18Z" fill="#fff" stroke="#111" /><path d="M2 28H10" stroke="#c0a020" stroke-width="2" /></symbol>
        <symbol id="n-m" viewBox="0 0 28 32"><path d="M6 14 18 5 24 10 12 20Z" fill="#888" stroke="#444" /><path d="M8 26 14 14M18 5 25 4" stroke="#777" stroke-width="3" /><circle cx="8" cy="26" r="4" fill="#f0a030" stroke="#666" /></symbol>
        <symbol id="n-n" viewBox="0 0 28 32"><path d="M2 13H12V26H2ZM2 26H21V29H2Z" fill="#ddd" stroke="#222" /><path d="M5 13V26M8 13V26M14 18H20V26M17 24 23 29" fill="none" stroke="#222" /><path d="M14 9 18 3H24L27 6 23 12H15Z" fill="#f2e090" stroke="#90a040" /></symbol>

        <symbol id="folder" viewBox="0 0 14 14"><path d="M.5 3V13.500H13.500V2.500H6L5 1H1.500Z" fill="#f4df8d" stroke="#8d7d45" /><rect x="5.500" y="4" width="7" height="7.500" fill="#fff8d0" /><path d="M6.500 5H11.500V7.500H7V10H11.500" fill="none" stroke="#0000e0" stroke-width="1.100" /></symbol>
        <symbol id="bulb" viewBox="0 0 8 16"><path d="M.5 1H7.500L5 11H3Z" fill="#ffd800" stroke="#c0a000" stroke-width=".6" /><circle cx="4" cy="14" r="1.800" fill="#ffd800" stroke="#c0a000" stroke-width=".5" /></symbol>
        <symbol id="check" viewBox="0 0 13 12"><path d="M1 6.500 4.700 10 12 1.500" fill="none" stroke="#12c840" stroke-width="2.800" /></symbol>
        <symbol id="op" viewBox="0 0 15 15"><path d="M1 2H5V8C5 11 9 11 11 13H3C1 11 1 7 1 2Z" fill="#20505a" /><path d="M3 1H7V8H3Z" fill="url(#tool)" /><path d="M10 8H14M11 11H14" stroke="#2050c0" stroke-dasharray="2 1" /></symbol>

        <symbol id="d-new" viewBox="0 0 26 26"><path d="M5 8 15 3 25 8V20L15 25 5 20Z" fill="#2f7fe8" /><path d="M5 8 15 3 25 8 15 13Z" fill="#a8d4ff" /><path d="M15 13V25L25 20V8Z" fill="#1a5ac4" /><path d="M8 1 10 7 15 4 11 9 16 12 10 11 8 15 7 10 2 11 6 8 3 4Z" fill="#fff27a" stroke="#e8a020" stroke-width=".5" /><circle cx="7" cy="19" r="4.500" fill="#ffca20" stroke="#d03010" /><circle cx="13" cy="18" r="2.500" fill="#e03020" /></symbol>
        <symbol id="d-wrench" viewBox="0 0 26 26"><path d="M21 2C17 1 14 4 15 8L5 17C2 18 1 22 3 24 5 26 9 25 10 21L19 11C23 12 26 9 25 5L21 8 18 6Z" fill="#f2c848" stroke="#a87e18" /><circle cx="6" cy="21" r="1.800" fill="#fff" stroke="#a87e18" /></symbol>
        <symbol id="d-part" viewBox="0 0 26 26"><path d="M3 10 9 5 13 7 13 12 17 14V8L23 7 24 19 14 24 3 19Z" fill="#dce6ff" stroke="#3a55d8" stroke-width="1.300" /><path d="M3 10 14 15 14 24M14 15 24 11" fill="none" stroke="#3a55d8" /></symbol>
        <symbol id="d-torch" viewBox="0 0 26 26"><path d="M2 5 6 1 16 11 21 12 14 19 13 14Z" fill="url(#torch)" stroke="#0c1a70" stroke-width=".6" /><path d="M14 19 21 12 24 17 19 22Z" fill="#1028a0" /><ellipse cx="21" cy="19" rx="4" ry="3" fill="#ffec40" transform="rotate(-45 21 19)" stroke="#222" stroke-width=".4" /></symbol>
        <symbol id="d-torchg" viewBox="0 0 26 26"><path d="M2 5 6 1 16 11 21 12 14 19 13 14Z" fill="#9fa8b0" /><path d="M14 19 21 12 24 17 19 22Z" fill="#a8b0b8" /><ellipse cx="21" cy="19" rx="4" ry="3" fill="#d8dad0" transform="rotate(-45 21 19)" /></symbol>
        <symbol id="d-check" viewBox="0 0 26 26"><path d="M2 12 13 6 24 15 24 20 13 24 2 17Z" fill="#b80c0c" /><path d="M2 12 13 6 24 15 13 19Z" fill="#ee1c1c" /><ellipse cx="13" cy="12.500" rx="4" ry="2" fill="none" stroke="#fff" /></symbol>
        <symbol id="d-area" viewBox="0 0 26 26"><path d="M2 7C6 2 11 3 14 8 16 12 21 11 25 16 20 21 12 23 6 17 4 15 3 11 2 7Z" fill="#0e7a78" stroke="#0a4a50" stroke-width=".6" /><path d="M4 17C9 19 12 22 19 20L25 16V20L14 25 4 20Z" fill="#c8d6f6" stroke="#6070c0" stroke-width=".6" /></symbol>
        <symbol id="d-trim" viewBox="0 0 26 26"><path d="M2 3H24V23H2Z" fill="#fff" stroke="#1020d0" stroke-width="1.200" /><path d="M3 9 8 4 13 9 18 5 23 10 21 15 24 20M3 9 6 13 4 17 8 18" fill="none" stroke="#e018c8" stroke-width="1.200" /><path d="M8 8 19 20M19 8 8 20" stroke="#222" stroke-width="1.600" /></symbol>
        <symbol id="d-tool" viewBox="0 0 26 26"><path d="M4 10H12L10 25H6Z" fill="url(#tool)" /><path d="M4 14 12 16M4 18 11 20" stroke="#88a" /><path d="M8 1 10 6 14 3 11 8 15 10 10 10 8 14 7 10 2 10 6 7 3 3Z" fill="#fff27a" stroke="#e8a020" stroke-width=".5" /><rect x="18" y="2" width="6" height="12" fill="#444" /><rect x="13" y="14" width="11" height="10" fill="#d8a818" stroke="#6a5010" /><rect x="16" y="17" width="4" height="4" fill="#fff" stroke="#222" /></symbol>
        <symbol id="d-wt" viewBox="0 0 26 26"><path d="M14 2C10 1 8 4 9 7L3 13C1 14 0 17 2 19 4 21 7 20 8 17L14 11C18 12 20 9 19 5L15 8 13 6Z" fill="#f2c848" stroke="#a87e18" /><path d="M7 13 11 9 19 15 23 15 17 22 16 18Z" fill="url(#torch)" stroke="#0c1a70" stroke-width=".5" /><ellipse cx="21" cy="21" rx="3.500" ry="2.500" fill="#ffec40" transform="rotate(-45 21 21)" stroke="#222" stroke-width=".4" /></symbol>
        <symbol id="d-wtg" viewBox="0 0 26 26"><path d="M14 2C10 1 8 4 9 7L3 13C1 14 0 17 2 19 4 21 7 20 8 17L14 11C18 12 20 9 19 5L15 8 13 6Z" fill="#c0bfb6" /><path d="M7 13 11 9 19 15 23 15 17 22 16 18Z" fill="#a8acb0" /><ellipse cx="21" cy="21" rx="3.500" ry="2.500" fill="#cccfc8" transform="rotate(-45 21 21)" /></symbol>
        <symbol id="d-layers" viewBox="0 0 26 26"><path d="M2 3H16M2 6H14M2 9H14M2 13H12M2 16H10M2 20H14M2 23H14" stroke="#111" stroke-width="1.400" /><path d="M21 1 14 10 18 10 15 17 24 8 20 8 24 1Z" fill="#ffe860" stroke="#888" stroke-width=".6" /></symbol>
        <symbol id="d-params" viewBox="0 0 26 26"><path d="M5 6H22" stroke="#1020d0" stroke-width="1.200" /><path d="M24 6 20 3.500V8.500Z" fill="#1020d0" /><rect x="3" y="12" width="20" height="10" fill="#fff" stroke="#111" /><path d="M5 22 11 12M9 22 15 12M13 22 19 12M17 22 23 12M3 18 6 12" stroke="#1020d0" /></symbol>
        <symbol id="d-noncut" viewBox="0 0 26 26"><path d="M7 5H22" stroke="#c01010" stroke-width="1.200" /><path d="M5 5 9 2.500V7.500Z" fill="#c01010" /><path d="M3 7V13M23 7V13" stroke="#c01010" /><path d="M3 14 1 10H5ZM23 6 21 10H25Z" fill="#c01010" /><rect x="3" y="15" width="20" height="9" fill="#fff" stroke="#111" /><path d="M5 24 10 15M9 24 14 15M13 24 18 15M17 24 22 15" stroke="#1020d0" /></symbol>
        <symbol id="d-feeds" viewBox="0 0 26 26"><rect x="7" y="1" width="7" height="22" fill="url(#tool)" /><path d="M8 3 13 6M8 9 13 12M8 15 13 18" stroke="#bcd" /><path d="M3 10C3 6 17 6 18 10 18 13 5 14 4 11" fill="none" stroke="#c01818" stroke-width="1.800" /><path d="M17 22H23V19L26 23 23 26V24H17Z" fill="#3a60e0" /></symbol>
        <symbol id="d-lock" viewBox="0 0 20 24"><path d="M5 11V7C5 1 15 1 15 7V11" fill="none" stroke="#a0a0a0" stroke-width="2" /><rect x="3" y="11" width="14" height="11" fill="#f2d040" stroke="#a08a20" /></symbol>
        <symbol id="d-unlock" viewBox="0 0 20 24"><path d="M11 11V6C11 1 19 1 19 6V9" fill="none" stroke="#999" stroke-width="2" /><rect x="2" y="11" width="13" height="10" fill="#f2d040" stroke="#a08a20" /></symbol>
        <symbol id="b-tool" viewBox="0 0 26 28"><rect x="8" y="2" width="6" height="18" fill="url(#tool)" /><path d="M8 5 14 8M8 10 14 13M8 15 14 18" stroke="#ccd" /><path d="M15 6H25M15 9 22 9M15 12 20 12" stroke="#888" /><path d="M5 24H16M10 20V27M7 21 13 26M13 21 7 26" stroke="#e8c020" /></symbol>
        <symbol id="b-s" viewBox="0 0 26 28"><path d="M10 2H3V10H10V18H3V26H10" fill="none" stroke="#333" stroke-width="1.600" /><path d="M14 24C14 18 22 18 22 24" fill="none" stroke="#123" stroke-width="1.800" /><path d="M20 23H25L22 27Z" fill="#123" /></symbol>
        <symbol id="b-doc" viewBox="0 0 26 28"><path d="M9 2H3V10H9V18H3V26H9" fill="none" stroke="#333" stroke-width="1.600" /><path d="M13 9H19L24 14V27H13Z" fill="#eef0ff" stroke="#7080c0" /><path d="M15 16H22M15 19H22M15 22H22" stroke="#667" /><path d="M15 2H18V7H21L16.500 11 12 7H15Z" fill="#e05020" /></symbol>
      </defs>
    </svg>

    <header class="titlebar">
      <div class="qat">
        <span class="nx">NX</span>
        <template v-for="(it, i) in topItems" :key="i">
          <span v-if="it.t === 'sep'" class="sep" :style="{ marginLeft: it.ml + 'px' }"></span>
          <svg v-else-if="it.t === 'ic'" class="ic qic" :style="{ marginLeft: it.ml + 'px', width: it.w + 'px' }"><use :href="'#' + it.ic" /></svg>
          <span v-else-if="it.t === 'tri'" class="tri-box" :class="{ dim: it.g }" :style="{ marginLeft: it.ml + 'px', width: it.w + 'px' }"><i class="tri"></i></span>
          <span v-else class="qtxt" :class="{ dimtxt: it.g }" :style="{ marginLeft: it.ml + 'px', width: it.w + 'px' }">{{ it.v }}</span>
        </template>
      </div>
      <div class="wintitle">NX 12.0.1.7 - 加工</div>
    </header>

    <nav class="tabs">
      <div class="tab file">文件(F)</div>
      <div class="tab home">主页</div>
      <div class="tab plain">燕秀UG工具</div>
    </nav>

    <section class="ribbon">
      <div class="grp g1">
        <div class="g1row"><svg class="ic i28"><use href="#g-op" /></svg><span class="tri-box"><i class="tri"></i></span></div>
        <div class="lab g1lab"><span>操作</span><i class="tri"></i></div>
      </div>
      <div class="grp g2">
        <div class="g2grid">
          <svg class="ic i26"><use href="#g-tool" /></svg>
          <svg class="ic i26"><use href="#g-toolg" /></svg>
          <svg class="ic big"><use href="#g-big1" /></svg>
          <svg class="ic big"><use href="#g-big2" /></svg>
          <svg class="ic i26"><use href="#g-s" /></svg>
          <svg class="ic i26"><use href="#g-ver" /></svg>
        </div>
      </div>
      <div class="grp g3"></div>
      <div class="grp g4"></div>
      <div class="grp ga">
        <svg class="ic anaic"><use href="#a-ana" /></svg>
        <span class="anatxt">分析</span>
        <i class="tri"></i>
      </div>
      <div class="grp gg">
        <div class="gggrid">
          <svg class="ic i24"><use href="#a-plus" /></svg><span class="tri-box"><i class="tri"></i></span>
          <svg class="ic i24"><use href="#a-extr" /></svg><span class="tri-box"><i class="tri"></i></span>
        </div>
        <div class="lab gglab"><span>几何...</span><i class="tri"></i></div>
      </div>
      <div class="grp gs">
        <div class="syncgrid">
          <template v-for="(c, i) in syncCells" :key="i">
            <span v-if="!c" class="cell"></span>
            <span v-else-if="c === 'tri'" class="cell"><i class="tri"></i></span>
            <span v-else class="cell"><svg class="ic i24"><use :href="'#' + c" /></svg></span>
          </template>
        </div>
        <div class="lab gslab"><span>同步建模</span><i class="tri"></i></div>
      </div>
      <div class="grp gr">
        <div class="rightgrid">
          <span v-for="(c, i) in rightCells" :key="i" class="cell"><svg class="ic i24"><use :href="'#' + c" /></svg></span>
        </div>
      </div>
    </section>

    <section class="selbar">
      <template v-for="(it, i) in selItems" :key="i">
        <span v-if="it.t === 'sep'" class="sep selsep" :style="{ marginLeft: it.ml + 'px' }"></span>
        <svg v-else-if="it.t === 'ic'" class="ic selic" :style="{ marginLeft: it.ml + 'px' }"><use :href="'#' + it.ic" /></svg>
        <span v-else-if="it.t === 'tri'" class="tri-box" :style="{ marginLeft: it.ml + 'px', width: it.w + 'px' }"><i class="tri"></i></span>
        <span v-else class="selcb" :style="{ marginLeft: it.ml + 'px', width: it.w + 'px' }"><em>{{ it.v }}</em><i class="tri grayt"></i></span>
      </template>
    </section>

    <main class="main">
      <aside class="rail">
        <div v-for="(r, i) in railItems" :key="i" class="railitem" :class="{ active: r.active }" :style="{ marginTop: r.m + 'px' }">
          <svg class="ic" :class="r.s ? 'i16' : 'railic'"><use :href="'#' + r.ic" /></svg>
        </div>
      </aside>

      <section class="nav">
        <div class="navtitle">工序导航器 - 程序顺序</div>
        <div class="table">
          <div class="thead">名称</div>
          <div class="tbody">
            <div v-for="(r, i) in treeRows" :key="i" class="trow" :class="{ odd: i % 2 }" :style="{ paddingLeft: rowPad(r) + 'px' }">
              <template v-if="r.plain"><span class="tname">{{ r.n }}</span></template>
              <template v-else>
                <template v-if="!r.bare">
                  <span class="exp" :class="{ none: !r.exp }">{{ r.exp === '+' ? '+' : r.exp ? '−' : '' }}</span>
                  <span class="mark">
                    <svg v-if="r.mark === 'bulb'" class="ic bulb"><use href="#bulb" /></svg>
                    <svg v-else class="ic chk"><use href="#check" /></svg>
                  </span>
                </template>
                <svg class="ic folder"><use :href="r.op ? '#op' : '#folder'" /></svg>
                <span class="tname" :class="{ purple: r.op, cjk: r.bare }">{{ r.n }}</span>
              </template>
            </div>
            <svg class="guides" width="340" height="672" aria-hidden="true">
              <path d="M9.500 37V60M9.500 37H20M28.500 72V515M47.500 96V325M66.500 120V132H77" fill="none" stroke="#777" stroke-dasharray="1 1" shape-rendering="crispEdges" />
              <path d="M15 60H19M34 84H38M53 108H57M47 156H58M47 180H58M47 204H58M47 228H58M47 252H58M47 276H58M47 300H58M47 324H58M34 348H38M34 372H38M34 396H38M34 420H38M34 444H38M34 468H38M34 492H38M34 516H38" fill="none" stroke="#777" stroke-dasharray="1 1" shape-rendering="crispEdges" />
            </svg>
          </div>
          <div class="hscroll"><i class="larr"></i><div class="thumb"><span></span><span></span><span></span></div></div>
        </div>
        <div class="navpanel">相关性</div>
        <div class="navpanel second">细节</div>
      </section>

      <section class="view">
        <div class="viewtabs"></div>
        <svg class="scene" width="1200" height="792" viewBox="374 230 1200 792">
          <g stroke="#2b2b2b" stroke-width=".8" stroke-linejoin="round">
            <polygon points="1166,328 1429,502 1204,613 941,442" fill="#cbe0e7" />
            <polygon points="941,442 1204,613 1191,836 935,553" fill="#636e72" />
            <polygon points="1204,613 1429,502 1412,817 1129,958 1135,863 1191,836" fill="#707b7f" />
            <polygon points="878,580 1135,863 1129,958 865,786" fill="#626c70" />
            <polygon points="878,580 935,553 1191,836 1135,863" fill="#d0e9f1" />
          </g>
          <g transform="translate(840 420) scale(.33333)" fill="none">
            <g stroke="#00f0f0" stroke-width="7">
              <line v-for="(l, i) in toolLines" :key="i" :x1="l[0]" :y1="l[1]" :x2="l[2]" :y2="l[3]" />
            </g>
            <g stroke="#10f010" stroke-width="9">
              <line v-for="(l, i) in greens" :key="i" :x1="l[0]" :y1="l[1]" :x2="l[2]" :y2="l[3]" />
            </g>
            <g stroke="#ffc000" stroke-width="9">
              <path d="M385 495 382 550M608 740 608 795M830 985 830 1040M1052 660 1062 655" />
            </g>
            <g stroke="#0000e8" stroke-width="9">
              <path d="M985 372 942 1165" stroke-dasharray="24 24" />
              <path d="M1068 440 1056 655" stroke-dasharray="22 22" />
              <path d="M222 375 225 358 388 447M385 470V495M495 652 498 634 610 692M610 715V740M717 898 718 877 830 935M830 960V985M938 1165 942 1142" />
            </g>
            <g stroke="#f6cfe0" stroke-width="7"><path d="M218 406 245 411M488 686 495 676M710 932 720 922M935 1172 942 1165" /></g>
            <g stroke="#f4a040" stroke-width="4.500">
              <path d="M217 108 133 148 212 198ZM177 770 95 812 170 862Z" />
              <path :d="chevrons" />
            </g>
            <path d="M88 930 232 860 222 1020M222 1020 358 1112 215 1185" stroke="#d8d8d8" stroke-width="2.500" />
            <path d="M75 1100 222 1020 262 1000" stroke="#b4dca4" stroke-width="3" />
            <path d="M75 1100 92 800M88 930 222 1020 215 1185" stroke="#0a28f0" stroke-width="3.500" />
            <path d="M75 1100 285 1232" stroke="#e03030" stroke-width="4" />
            <path d="M285 1232 345 1270" stroke="#1030e0" stroke-width="3" />
            <path d="M52 1098H78M75 1085V1118" stroke="#0a28f0" stroke-width="4" />
            <path d="M80 895 98 895 92 855ZM84 810 100 810 92 775Z" fill="#1030c0" />
            <path d="M238 1208 260 1200 288 1235Z" fill="#f05050" />
            <path d="M308 1250 322 1245 350 1274Z" fill="#1030e0" />
            <path d="M250 1000 260 1015 304 982Z" fill="#b4e0a4" />
            <path d="M328 962 336 976 366 952Z" fill="#f0f0f0" />
            <g class="triad" stroke="none">
              <text x="27" y="836" fill="#1050f0">ZM</text>
              <text x="252" y="970" fill="#3a7a3a">YM</text>
              <text x="372" y="955" fill="#b8b8b8">Y</text>
              <text x="233" y="1276" fill="#d23838">XM</text>
              <text x="350" y="1298" fill="#2040e0">X</text>
              <text x="84" y="768" fill="#1050f0" class="sm">Z</text>
            </g>
          </g>
        </svg>
        <div class="viewline"></div>
      </section>
    </main>

    <footer class="status">
      <span class="stleft">指定参数</span>
      <span class="stmid">当前：ZLEVEL_PROFILE</span>
    </footer>
    <div class="taskbar">
      <span class="tb s0"></span><span class="tb s1"></span><span class="tb s2"></span><span class="tb s3"></span>
    </div>
    <div class="orb"></div>

    <div class="dialog">
      <div class="dhead">
        <svg class="dgear" viewBox="0 0 20 20"><circle cx="10" cy="10" r="5" fill="none" stroke="#fff" stroke-width="3.600" /><path d="M10 1V4M10 16V19M1 10H4M16 10H19M4 4 6 6M14 14 16 16M16 4 14 6M6 14 4 16" stroke="#fff" stroke-width="2.400" /></svg>
        <span class="dtitle">深度轮廓铣 - [ZLEVEL_PROFILE]</span>
        <svg class="dclose" viewBox="0 0 12 12"><path d="M1 1 11 11M11 1 1 11" stroke="#fff" stroke-width="2" /></svg>
      </div>
      <div class="dbody">
        <template v-for="(r, i) in dialogRows" :key="i">
          <div v-if="r.sep" class="dsep"></div>
          <div v-else-if="r.cb" class="drow cbrow" :class="r.h"><i class="cbx"></i><span>{{ r.l }}</span></div>
          <div v-else class="drow" :class="r.h">
            <span class="dlab" :class="r.low">{{ r.l }}</span>
            <div class="ctrls">
              <template v-for="(c, j) in r.items" :key="j">
                <div v-if="c.t === 'combo' || c.t === 'unit'" class="combo" :style="{ width: c.w + 'px' }"><span class="cval">{{ c.v }}</span><i class="tri"></i></div>
                <div v-else-if="c.t === 'num'" class="num" :style="{ width: c.w + 'px' }"><span :class="{ sel: c.sel }">{{ c.v }}</span></div>
                <div v-else-if="c.t === 'lock'" class="lockbtn"><svg class="ic lk"><use :href="'#' + c.ic" /></svg></div>
                <div v-else class="ibtn" :class="{ dis: c.dis }"><svg class="ic i26"><use :href="'#' + c.ic" /></svg></div>
              </template>
            </div>
          </div>
        </template>
        <div class="dpanel first"><span>机床控制</span><svg class="chev" viewBox="0 0 14 10"><path d="M1 1 7 8 13 1" fill="none" stroke="#136f8f" stroke-width="3" /></svg></div>
        <div class="dpanel"><span>选项</span><svg class="chev" viewBox="0 0 14 10"><path d="M1 1 7 8 13 1" fill="none" stroke="#136f8f" stroke-width="3" /></svg></div>
        <div class="dactions">
          <div class="ibtn"><svg class="ic i26"><use href="#b-tool" /></svg></div>
          <div class="ibtn"><svg class="ic i26"><use href="#b-s" /></svg></div>
          <div class="ibtn"><svg class="ic i26"><use href="#g-ver" /></svg></div>
          <div class="ibtn"><svg class="ic i26"><use href="#b-doc" /></svg></div>
        </div>
        <div class="dfoot">
          <button class="ok">确定</button>
          <button class="cancel">取消</button>
        </div>
      </div>
    </div>

    <div class="mark3d">
      <svg class="logo" viewBox="0 0 72 82">
        <polygon points="36,0 71,20 71,62 36,82 1,62 1,20" fill="rgba(42,175,255,.6)" />
        <path d="M15 12 36 0 55 12 54 32Q47 14 15 12Z" fill="rgba(200,215,225,.6)" />
        <path d="M1 20 15 12Q30 14 40 20 22 24 14 36 10 46 12 58L1 50Z" fill="rgba(170,205,225,.45)" />
        <path d="M1 50 12 58Q16 68 30 76L36 82 1 62Z" fill="rgba(170,205,225,.2)" />
        <polygon points="36,18 57,30 57,52 36,64 15,52 15,30" fill="#58585a" />
        <polygon points="36,23 53,32 36,41 19,32" fill="#5f9dc0" />
        <polygon points="19,32 36,41 36,60 19,50" fill="#4a8cb0" />
        <polygon points="53,32 36,41 36,60 53,50" fill="#2a7ca8" />
      </svg>
      <div class="marktxt">
        <div class="m1">3D世界网</div>
        <div class="m2">WWW.3DSJW.COM</div>
      </div>
    </div>
  </div>
</template>

<style>
html, body { margin: 0; background: #fff; }
</style>

<style scoped>
.page {
  width: 1574px; height: 1050px; position: relative; overflow: hidden; display: flex; flex-direction: column;
  font-family: "Noto Sans", "Noto Sans CJK SC", sans-serif; font-size: 15px; color: #222; background: #fff;
}
.defs { position: absolute; }
.ic { display: block; flex: none; height: 18px; width: 18px; overflow: visible; }
.i16 { width: 16px; height: 16px; }
.i24 { width: 24px; height: 24px; }
.i26 { width: 26px; height: 26px; }
.i28 { width: 28px; height: 34px; }
.sep { width: 1px; height: 22px; background: #ddd; flex: none; }
.tri { display: block; width: 0; height: 0; border-top: 5px solid #222; border-left: 4.500px solid transparent; border-right: 4.500px solid transparent; flex: none; }
.tri-box { display: flex; align-items: center; justify-content: center; flex: none; }
.dim .tri { border-top-color: #bbb; }

.titlebar { height: 30px; flex: none; display: flex; align-items: center; position: relative; }
.qat { width: 1041px; height: 30px; display: flex; align-items: center; position: relative; flex: none; }
.nx { position: absolute; left: 0; top: 1px; font: bold 27px/28px "Liberation Sans", sans-serif; color: #7c8a96; letter-spacing: -1px; }
.qic { height: 18px; }
.qtxt { font-size: 14px; line-height: 20px; white-space: nowrap; flex: none; }
.dimtxt { color: #c4c4c4; }
.wintitle { font-size: 15px; white-space: nowrap; letter-spacing: .3px; }

.tabs { height: 32px; flex: none; background: #dcdcdc; display: flex; }
.tab { line-height: 30px; font-size: 16px; white-space: nowrap; }
.file { width: 87px; padding-right: 6px; box-sizing: border-box; background: #549fb9; color: #fff; text-align: center; }
.home { width: 58px; margin-left: 2px; margin-top: 1px; line-height: 29px; background: #fff; color: #136f8f; text-align: center; border-top: 1px solid #c8c8c8; }
.plain { margin-left: 13px; line-height: 32px; }

.ribbon { height: 106px; flex: none; display: flex; border-bottom: 1px solid #dcdcdc; box-sizing: border-box; }
.grp { height: 95px; margin-top: 5px; border-right: 1px solid #dcdcdc; box-sizing: border-box; position: relative; flex: none; display: flex; flex-direction: column; }
.g1 { width: 59px; }
.g2 { width: 189px; }
.g3 { width: 132px; }
.g4 { width: 259px; }
.ga { width: 43px; align-items: center; }
.gg { width: 63px; }
.gs { width: 305px; }
.gr { width: 470px; }
.lab { margin-top: auto; height: 13px; display: flex; align-items: flex-start; color: #136f8f; font-size: 15px; line-height: 17px; position: relative; white-space: nowrap; }
.lab .tri { position: absolute; top: 5px; }
.g1row { display: flex; align-items: center; padding: 4px 0 0 8px; gap: 6px; height: 36px; }
.g1row .tri-box { width: 9px; }
.g1lab { padding-left: 3px; }
.g1lab .tri { left: 42px; }
.g2grid { display: grid; grid-template-columns: 32px 32px 58px 52px; grid-template-rows: 36px 36px; padding: 1px 0 0 5px; justify-items: center; align-items: center; }
.big { width: 48px; height: 60px; grid-row: 1 / span 2; }
.g2grid .big:nth-child(3) { grid-column: 3; }
.g2grid .big:nth-child(4) { grid-column: 4; }
.anaic { width: 34px; height: 34px; margin-top: 1px; }
.anatxt { font-size: 15px; line-height: 20px; margin-top: 2px; }
.ga .tri { margin-top: 6px; }
.gggrid { display: grid; grid-template-columns: 24px 24px; grid-template-rows: 36px 36px; padding: 1px 0 0 13px; align-items: center; justify-items: center; }
.gggrid .tri-box { margin-left: 12px; }
.gglab { padding-left: 2px; }
.gglab .tri { left: 44px; }
.syncgrid { display: grid; grid-template-columns: 32px 33px 33px 12px 38px 11px 38px 8px 40px 28px 16px; grid-template-rows: 36px 36px; padding: 1px 0 0 8px; }
.rightgrid { display: grid; grid-template-columns: repeat(14, 33px); grid-template-rows: 36px 36px; padding: 1px 0 0 5px; }
.cell { display: flex; align-items: center; justify-content: center; }
.gslab { justify-content: center; }
.gslab span { margin-left: -21px; }
.gslab .tri { right: 9px; }

.selbar { height: 36px; flex: none; display: flex; align-items: center; box-sizing: border-box; border-bottom: 1px solid #a2a8a8; }
.selsep { height: 26px; }
.selic { width: 18px; height: 18px; }
.selcb { height: 24px; box-sizing: border-box; border: 1px solid #aaa; display: flex; align-items: center; justify-content: space-between; padding: 0 8px 0 2px; flex: none; background: #fff; color: #c4c4c4; font-size: 14px; }
.selcb em { font-style: normal; white-space: nowrap; }
.grayt { border-top-color: #a8a8a8; border-top-width: 6px; border-left-width: 6px; border-right-width: 6px; }

.main { flex: none; height: 819px; display: flex; }
.rail { width: 28px; flex: none; background: #dcdcdc; border-right: 1px solid #a8a8a8; box-sizing: border-box; display: flex; flex-direction: column; align-items: center; overflow: hidden; }
.railitem { flex: none; display: flex; align-items: center; justify-content: center; width: 27px; }
.railitem.active { width: 28px; height: 44px; background: #fff; border-top: 1px solid #aaa; border-bottom: 1px solid #aaa; box-sizing: border-box; }
.railic { width: 27px; height: 32px; }

.nav { width: 346px; flex: none; box-sizing: border-box; background: #fff; display: flex; flex-direction: column; }
.navtitle { height: 31px; line-height: 33px; padding-left: 10px; font-size: 15px; white-space: nowrap; }
.table { margin-left: 7px; border-left: 1px solid #d0d0d0; border-top: 1px solid #d0d0d0; height: 720px; box-sizing: border-box; }
.thead { height: 25px; box-sizing: border-box; background: #f2f2f2; border-bottom: 1px solid #ddd; line-height: 28px; padding-left: 6px; font-size: 15px; margin-top: -1px; }
.tbody { position: relative; }
.trow { height: 24px; box-sizing: border-box; border-bottom: 1px solid #e8e8e8; padding-top: 2px; display: flex; align-items: center; white-space: nowrap; background: #fff; }
.trow.odd { background: #fafafa; }
.exp { width: 11px; height: 11px; box-sizing: border-box; border: 1px solid #c8c8c8; background: #fff; font: 13px/9px "Liberation Sans", sans-serif; text-align: center; color: #111; margin-right: 6px; flex: none; }
.exp.none { border: 0; background: none; }
.mark { width: 13px; height: 16px; margin-right: 2px; display: flex; align-items: center; justify-content: center; flex: none; }
.bulb { width: 8px; height: 16px; }
.chk { width: 13px; height: 12px; }
.folder { width: 14px; height: 14px; margin-right: 4px; }
.tname { font-size: 16px; line-height: 22px; color: #222; }
.tname.cjk { font-size: 15px; }
.tname.purple { font-size: 15.500px; color: #7a35d8; }
.guides { position: absolute; left: 0; top: 0; pointer-events: none; }
.hscroll { height: 23px; background: #f2f2f2; display: flex; align-items: center; position: relative; box-sizing: border-box; }
.larr { width: 0; height: 0; border-right: 5px solid #444; border-top: 5px solid transparent; border-bottom: 5px solid transparent; margin-left: 8px; }
.thumb { width: 134px; height: 19px; margin-left: 9px; box-sizing: border-box; border: 1px solid #999; background: linear-gradient(#e8e8e8, #c8c8c8); display: flex; align-items: center; justify-content: center; gap: 2px; border-radius: 2px; }
.thumb span { width: 1px; height: 9px; background: #555; }
.navpanel { margin-left: 6px; height: 34px; box-sizing: border-box; border-top: 2px solid #b8b8b8; border-bottom: 2px solid #ccc; color: #1c7f9f; font-size: 18px; line-height: 30px; padding: 4px 0 0 7px; }
.navpanel.second { border-top: 0; height: 28px; line-height: 28px; padding-top: 0; margin-right: 10px; }

.view { flex: 1; display: flex; flex-direction: column; min-width: 0; }
.viewtabs { height: 24px; background: #fff; border-bottom: 2px solid #549fb9; flex: none; }
.scene { display: block; flex: none; background: linear-gradient(#1f2022, #58585a); }
.viewline { height: 1px; background: #a0a0a0; flex: none; }
.triad text { font: 38px "Noto Sans", sans-serif; }
.triad .sm { font-size: 26px; }

.status { height: 23px; flex: none; position: relative; font-weight: bold; font-size: 14px; line-height: 22px; background: #fff; display: flex; }
.stleft { width: 912px; flex: none; font-weight: 500; }
.stmid { white-space: nowrap; letter-spacing: .2px; }
.taskbar { height: 4px; flex: none; background: #55504e; border-top: 1px solid #222; box-sizing: border-box; display: flex; }
.tb { height: 3px; flex: none; background: #d8d8d8; margin-right: 2px; }
.s0 { width: 0; margin-left: 218px; }
.s1 { width: 160px; }
.s2 { width: 160px; }
.s3 { width: 160px; }
.orb { position: absolute; left: 10px; top: 1040px; width: 36px; height: 36px; border-radius: 50%; background: radial-gradient(circle at 50% 40%, #d05030 0 22%, #3a7fb8 60%, #205070); border: 1px solid #123; box-sizing: border-box; }

.dialog { position: absolute; left: 250px; top: 70px; width: 380px; height: 940px; background: #efefef; border-left: 1px solid #c4c4c4; border-bottom: 1px solid #c4c4c4; box-sizing: border-box; }
.dhead { height: 27px; background: #549fb9; color: #fff; display: flex; align-items: center; margin-left: -1px; }
.dgear { width: 14px; height: 14px; margin-left: 9px; flex: none; }
.dtitle { margin-left: 9px; font-size: 18px; white-space: nowrap; line-height: 26px; letter-spacing: .25px; }
.dclose { width: 11px; height: 11px; margin-left: auto; margin-right: 13px; flex: none; }
.dbody { padding: 8px 10px 0 9px; }
.drow { display: flex; align-items: flex-start; }
.h34 { height: 34px; } .h30 { height: 30px; } .h28 { height: 28px; } .h26 { height: 26px; } .h22 { height: 22px; }
.dlab { line-height: 28px; font-size: 15px; white-space: nowrap; }
.dlab.low { margin-top: 7px; }
.dlab.mid { margin-top: 3px; }
.dlab.up { line-height: 26px; }
.ctrls { margin-left: auto; display: flex; gap: 2px; align-items: flex-start; }
.dsep { height: 1px; background: #d2d2d2; margin-bottom: 3px; }
.combo { height: 28px; box-sizing: border-box; background: #fff; border: 1px solid #a8a8a8; display: flex; align-items: center; padding: 0 8px 0 4px; justify-content: space-between; flex: none; overflow: hidden; }
.cval { font-size: 15px; line-height: 26px; white-space: nowrap; overflow: hidden; letter-spacing: .2px; }
.num { height: 27px; box-sizing: border-box; background: #fff; border: 1px solid #a8a8a8; text-align: right; padding-right: 3px; font: 16px/24px "DejaVu Sans Mono", monospace; letter-spacing: .6px; color: #555; flex: none; white-space: nowrap; }
.sel { display: inline-block; background: #3c9cff; color: #fff; width: 81px; height: 19px; line-height: 19px; margin-top: 2px; border-left: 1px solid #c06020; box-sizing: border-box; }
.ibtn { width: 32px; height: 32px; box-sizing: border-box; background: #eee; border: 1px solid #a8a8a8; display: flex; align-items: center; justify-content: center; flex: none; }
.ibtn.dis { border-color: #dcdcdc; }
.lockbtn { width: 24px; height: 24px; box-sizing: border-box; background: #eee; border: 1px solid #a8a8a8; display: flex; align-items: center; justify-content: center; flex: none; }
.lk { width: 14px; height: 17px; }
.cbrow { align-items: flex-start; gap: 4px; }
.cbx { width: 18px; height: 18px; box-sizing: border-box; border: 1px solid #999; background: linear-gradient(135deg, #d0d0d0, #f6f6f6); display: block; flex: none; }
.cbrow span { line-height: 18px; }
.dpanel { display: flex; background: #fff; box-shadow: 0 1px 0 #ccc; height: 27px; align-items: center; justify-content: space-between; padding: 0 7px; margin-bottom: 6px; color: #1c7f9f; font-size: 18px; box-sizing: border-box; }
.dpanel.first { margin-bottom: 4px; }
.chev { width: 14px; height: 10px; flex: none; }
.dactions { display: flex; gap: 2px; justify-content: center; height: 44px; }
.dfoot { display: flex; justify-content: flex-end; gap: 5px; padding-right: 6px; }
.dfoot button { width: 60px; height: 28px; box-sizing: border-box; font-family: inherit; font-size: 15px; border: 0; padding: 0; }
.ok { background: #70b2c8; color: #fff; }
.dfoot .cancel { background: #dcdcdc; color: #222; border: 1px solid #b8b8b8; }

.mark3d { position: absolute; left: 1291px; top: 955px; display: flex; pointer-events: none; z-index: 5; }
.logo { width: 72px; height: 82px; flex: none; }
.marktxt { margin-left: 9px; color: rgba(255, 255, 255, .43); }
.m1 { font: bold 41px/40px "Liberation Sans", "Noto Sans CJK SC", sans-serif; margin-top: 12px; white-space: nowrap; }
.m2 { font: 15px/16px "Liberation Sans", sans-serif; letter-spacing: 3.200px; white-space: nowrap; margin-top: 5px; }
</style>
